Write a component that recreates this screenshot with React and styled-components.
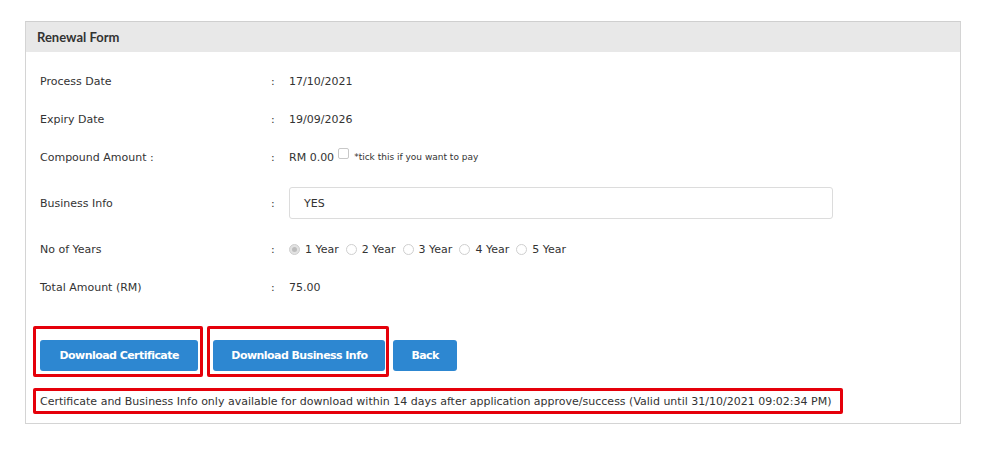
import React from "react";
import styled, { createGlobalStyle } from "styled-components";

const Global = createGlobalStyle`
  html, body { margin: 0; padding: 0; background: #fff; }
  body { font-family: "DejaVu Sans", Tahoma, Verdana, sans-serif; color: #333; }
`;

const Page = styled.div`
  padding: 21px 21px 0 25px;
  width: 936px;
`;

const Panel = styled.section`
  border: 1px solid #d4d4d4;
  border-top-color: #cfcfcf;
  background: #fff;
`;

const Header = styled.div`
  height: 30px;
  background: #e8e8e8;
  display: flex;
  align-items: center;
  padding-left: 11px;
  font-family: Lato, "DejaVu Sans", sans-serif;
  font-weight: 700;
  font-size: 13px;
  color: #333;
`;

const Body = styled.div`
  padding: 10px 14px 9px 14px;
`;

const Row = styled.div`
  display: grid;
  grid-template-columns: 231px 18px 1fr;
  align-items: center;
  height: ${(p) => p.$h || 38}px;
  font-size: 11px;
`;

const Colon = styled.span``;

const Value = styled.div`
  display: flex;
  align-items: center;
  gap: 4px;
`;

const Small = styled.span`
  font-size: 9px;
  margin-left: 1px;
`;

const Box = styled.span`
  width: 11px;
  height: 11px;
  border: 1px solid #c8c8c8;
  border-radius: 2px;
  box-sizing: border-box;
  background: #fff;
  display: inline-block;
  margin-top: -7px;
`;

const Input = styled.div`
  width: 544px;
  height: 32px;
  box-sizing: border-box;
  border: 1px solid #dcdcdc;
  border-radius: 3px;
  padding-left: 14px;
  display: flex;
  align-items: center;
  font-size: 11px;
`;

const RadioGroup = styled.div`
  display: flex;
  align-items: center;
`;

const RadioItem = styled.label`
  display: flex;
  align-items: center;
  gap: 5px;
  margin-right: 7px;
`;

const Dot = styled.span`
  width: 11px;
  height: 11px;
  border-radius: 50%;
  box-sizing: border-box;
  border: 1px solid #cfcfcf;
  background: ${(p) => (p.$on ? "#e2e2e2" : "#fff")};
  position: relative;
  &::after {
    content: "";
    display: ${(p) => (p.$on ? "block" : "none")};
    position: absolute;
    inset: 2px;
    border-radius: 50%;
    background: #bdbdbd;
  }
`;

const Actions = styled.div`
  display: flex;
  align-items: flex-end;
  gap: 4px;
  margin: 20px 0 0 -7px;
`;

const Mark = styled.div`
  border: 3px solid #e5000a;
  border-radius: 2px;
  padding: ${(p) => p.$pad};
  display: flex;
`;

const Button = styled.button`
  height: 31px;
  padding: 0 ${(p) => p.$px || 18}px;
  border: none;
  border-radius: 3px;
  background: #2d87d1;
  color: #fff;
  font-family: "DejaVu Sans", Tahoma, sans-serif;
  font-weight: 700;
  font-size: 11px;
  letter-spacing: -0.55px;
  cursor: pointer;
  margin-bottom: ${(p) => p.$mb || 0}px;
`;

const Notice = styled.div`
  margin: 11px 0 0 -7px;
  width: 810px;
  box-sizing: border-box;
  border: 3px solid #e5000a;
  border-radius: 2px;
  height: 26px;
  display: flex;
  align-items: center;
  padding-left: 4px;
  font-size: 11px;
  white-space: nowrap;
`;

const years = [1, 2, 3, 4, 5];

export default function App() {
  return (
    <>
      <Global />
      <Page>
        <Panel>
          <Header>Renewal Form</Header>
          <Body>
            <Row>
              <span>Process Date</span>
              <Colon>:</Colon>
              <Value>17/10/2021</Value>
            </Row>
            <Row>
              <span>Expiry Date</span>
              <Colon>:</Colon>
              <Value>19/09/2026</Value>
            </Row>
            <Row>
              <span>Compound Amount :</span>
              <Colon>:</Colon>
              <Value>
                RM 0.00 <Box /> <Small>*tick this if you want to pay</Small>
              </Value>
            </Row>
            <Row $h={54}>
              <span>Business Info</span>
              <Colon>:</Colon>
              <Input>YES</Input>
            </Row>
            <Row>
              <span>No of Years</span>
              <Colon>:</Colon>
              <RadioGroup>
                {years.map((y) => (
                  <RadioItem key={y}>
                    <Dot $on={y === 1} />
                    {y} Year
                  </RadioItem>
                ))}
              </RadioGroup>
            </Row>
            <Row>
              <span>Total Amount (RM)</span>
              <Colon>:</Colon>
              <Value>75.00</Value>
            </Row>
            <Actions>
              <Mark $pad="11px 2px 3px 4px">
                <Button $px={19.5}>Download Certificate</Button>
              </Mark>
              <Mark $pad="11px 1px 3px 3px">
                <Button>Download Business Info</Button>
              </Mark>
              <Button $mb={6}>Back</Button>
            </Actions>
            <Notice>
              Certificate and Business Info only available for download within 14 days after application approve/success (Valid until 31/10/2021 09:02:34 PM)
            </Notice>
          </Body>
        </Panel>
      </Page>
    </>
  );
}
